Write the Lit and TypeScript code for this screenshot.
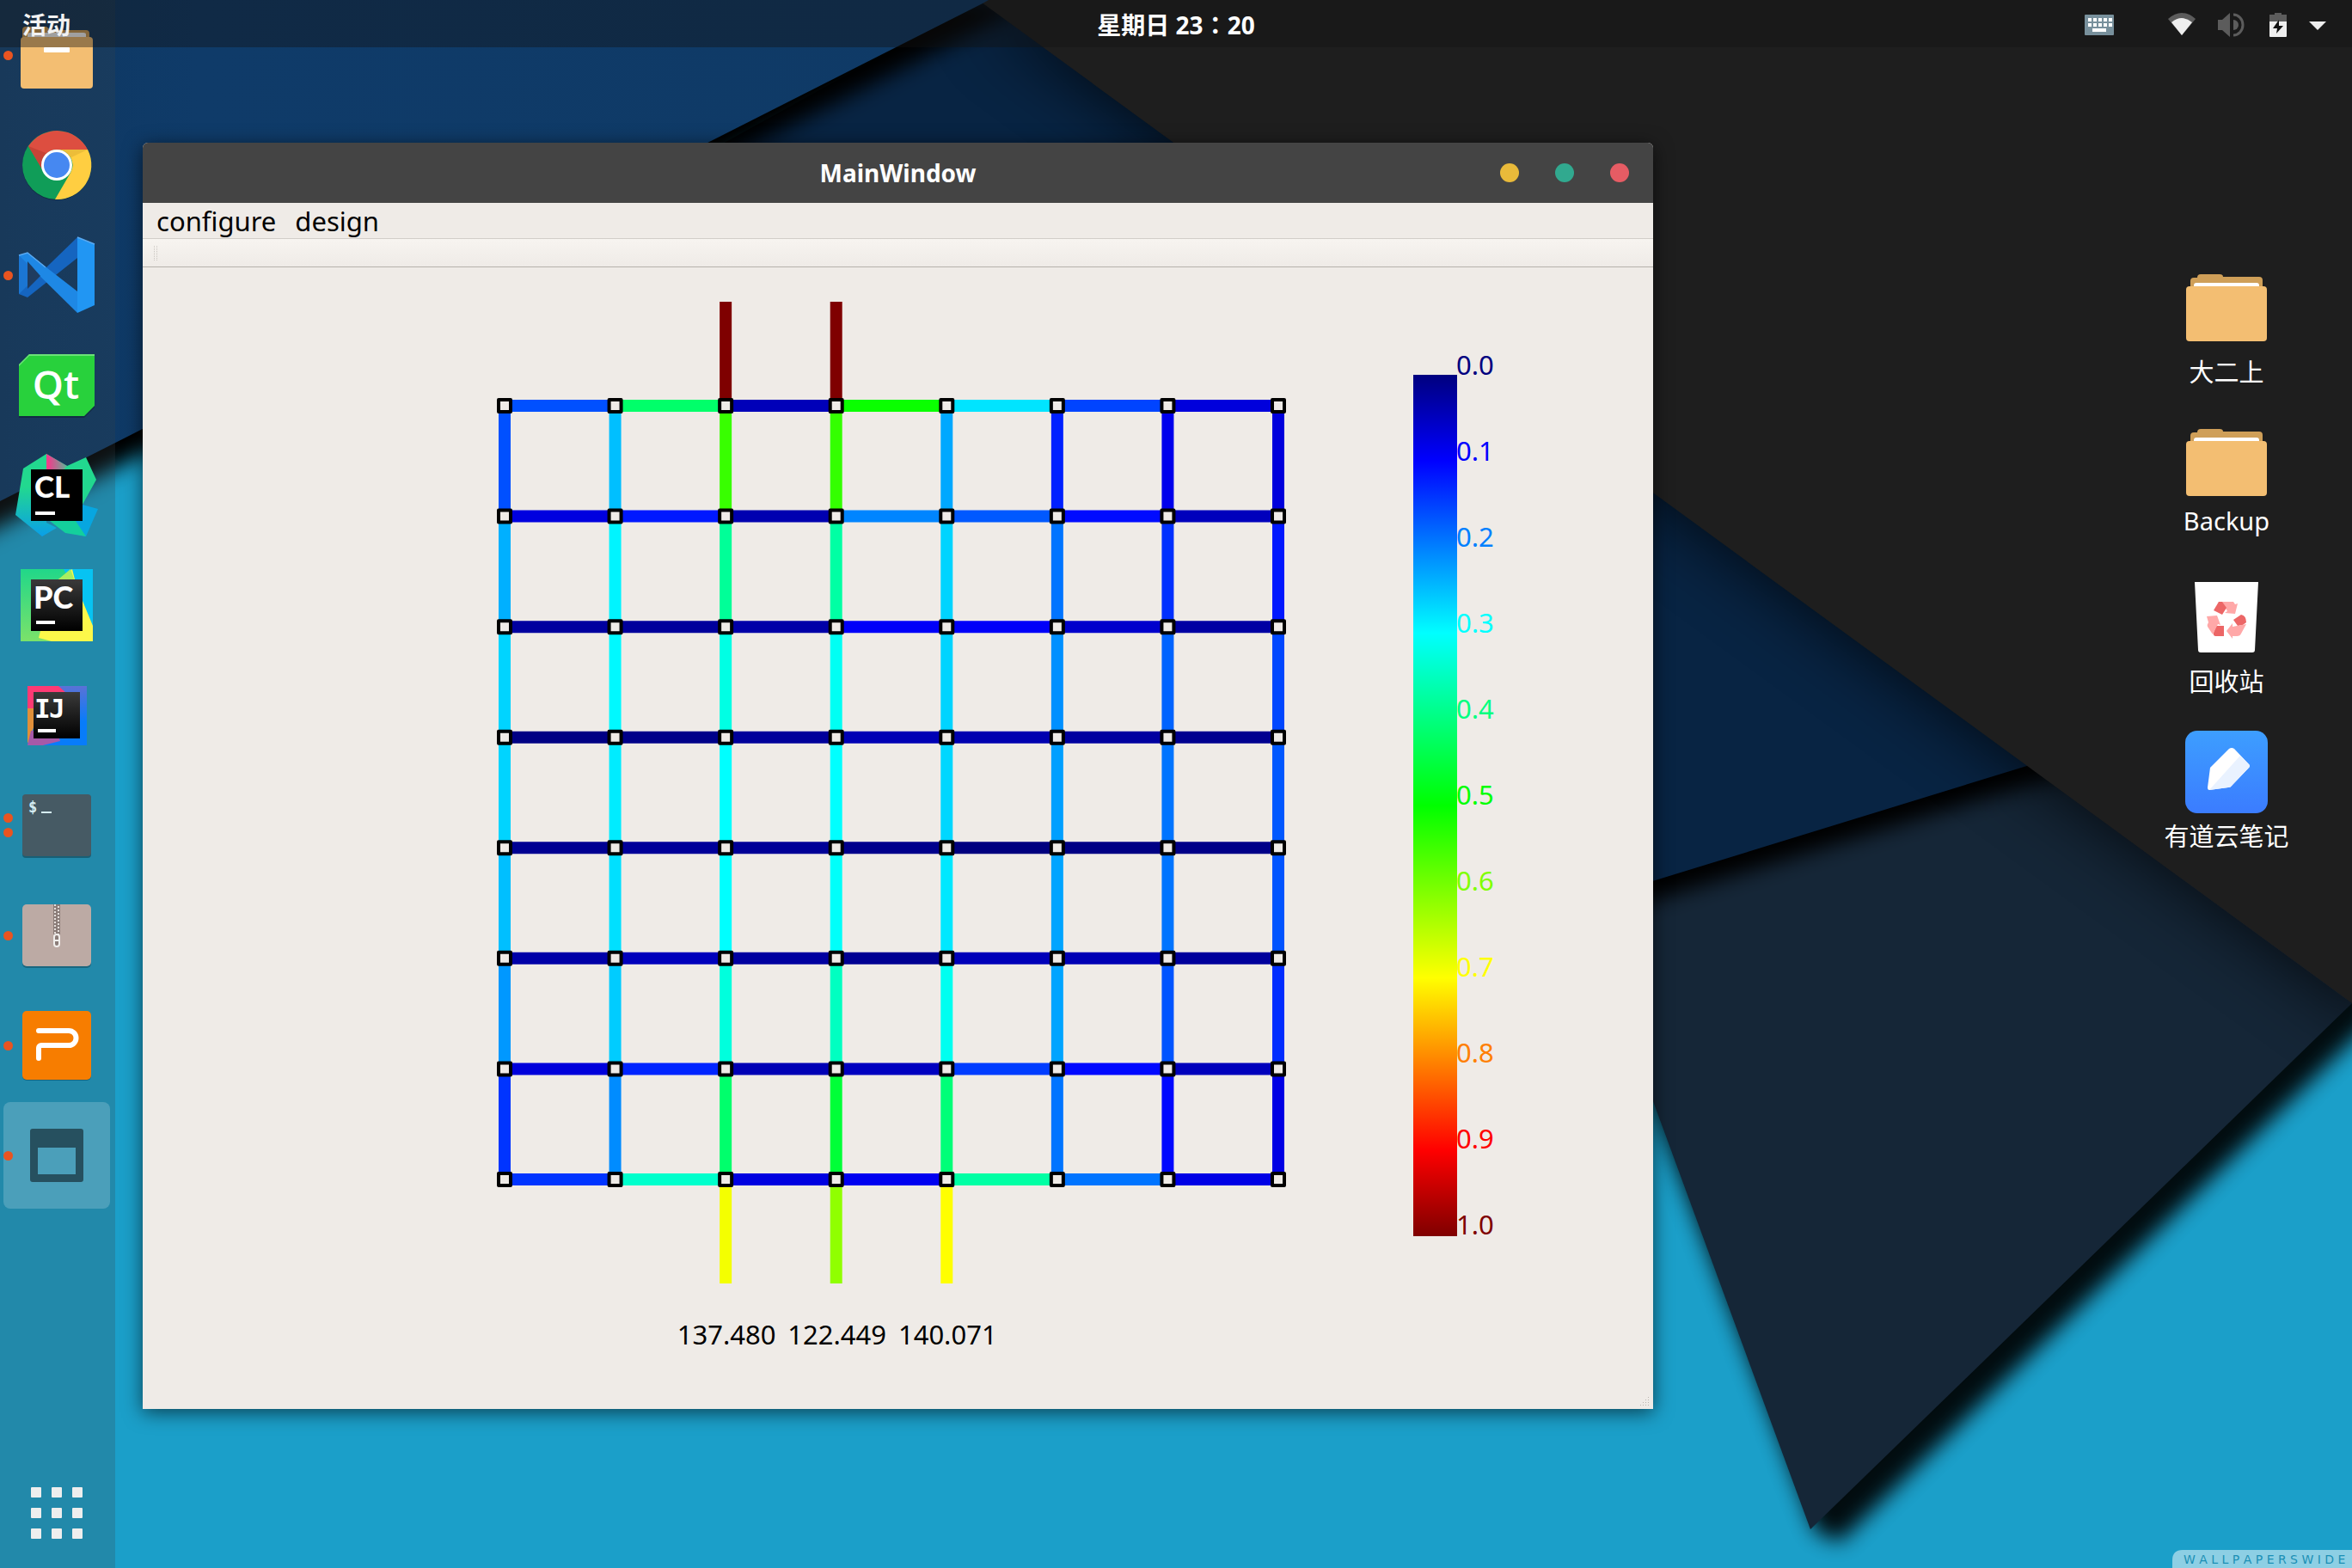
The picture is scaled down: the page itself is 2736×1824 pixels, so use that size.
import { LitElement, html, svg, css } from "lit";
import { customElement, property } from "lit/decorators.js";

const STOPS: [number, number[]][] = [
  [0, [0, 0, 127]],
  [0.1, [0, 0, 255]],
  [0.3, [0, 255, 255]],
  [0.5, [0, 255, 0]],
  [0.7, [255, 255, 0]],
  [0.9, [255, 0, 0]],
  [1, [127, 0, 0]],
];

/** Colour of a flow value between 0 and 1 on the rainbow scale. */
function heat(v: number): string {
  for (let i = 1; i < STOPS.length; i++) {
    const [hi, b] = STOPS[i];
    const [lo, a] = STOPS[i - 1];
    if (v <= hi) {
      const t = (v - lo) / (hi - lo);
      return `rgb(${a.map((c, k) => Math.round(c + (b[k] - c) * t)).join(",")})`;
    }
  }
  return "rgb(127,0,0)";
}

/** Flow through the horizontal channels, one row of the chip per line. */
const ACROSS = [
  [0.163, 0.417, 0.045, 0.508, 0.279, 0.153, 0.073],
  [0.075, 0.119, 0.038, 0.204, 0.17, 0.109, 0.048],
  [0.025, 0.023, 0.032, 0.095, 0.095, 0.06, 0.028],
  [0.004, 0.008, 0.022, 0.042, 0.038, 0.026, 0.013],
  [0.015, 0.02, 0.019, 0.01, 0, 0.004, 0.007],
  [0.032, 0.048, 0.026, 0.016, 0.045, 0.042, 0.023],
  [0.072, 0.128, 0.042, 0.051, 0.147, 0.106, 0.048],
  [0.141, 0.34, 0.076, 0.088, 0.371, 0.191, 0.08],
];

/** Flow through the vertical channels between two rows of nodes. */
const DOWN = [
  [0.163, 0.25, 0.544, 0.541, 0.232, 0.125, 0.085, 0.073],
  [0.238, 0.291, 0.381, 0.371, 0.266, 0.191, 0.138, 0.119],
  [0.266, 0.295, 0.321, 0.309, 0.266, 0.213, 0.178, 0.156],
  [0.266, 0.285, 0.3, 0.3, 0.269, 0.225, 0.191, 0.169],
  [0.25, 0.276, 0.3, 0.304, 0.282, 0.229, 0.191, 0.166],
  [0.219, 0.26, 0.327, 0.349, 0.312, 0.229, 0.166, 0.135],
  [0.141, 0.21, 0.415, 0.456, 0.406, 0.191, 0.106, 0.079],
];

const INLETS = [
  { col: 2, value: 1 },
  { col: 3, value: 1 },
];
const OUTLETS = [
  { col: 2, value: 0.691, label: "137.480" },
  { col: 3, value: 0.613, label: "122.449" },
  { col: 4, value: 0.7, label: "140.071" },
];

@customElement("flow-chart")
class FlowChart extends LitElement {
  static styles = css`
    :host { display: block; }
    .canvas { display: block; width: 100%; height: auto; }
    .label { font: 31px "Noto Sans", "Open Sans", sans-serif; }
    .node { fill: #efebe7; stroke: #000; stroke-width: 4; stroke-linejoin: round; }
    .pipe { stroke-width: 14; }
  `;

  render() {
    const x = (i: number) => 421 + (i * 900) / 7;
    const y = (j: number) => 161 + (j * 900) / 7;
    const pipe = (x1: number, y1: number, x2: number, y2: number, v: number) =>
      svg`<line class="pipe" x1=${x1} y1=${y1} x2=${x2} y2=${y2} stroke=${heat(v)}></line>`;
    const idx = [0, 1, 2, 3, 4, 5, 6, 7];
    return html`<svg class="canvas" viewBox="0 0 1757 1328" role="img" aria-label="Channel flow">
      <defs>
        <linearGradient id="scale" x1="0" y1="0" x2="0" y2="1">
          ${STOPS.map(([o]) => svg`<stop offset=${o} stop-color=${heat(o)}></stop>`)}
        </linearGradient>
      </defs>
      ${INLETS.map((p) => pipe(x(p.col), 40, x(p.col), y(0), p.value))}
      ${OUTLETS.map((p) => pipe(x(p.col), y(7), x(p.col), 1182, p.value))}
      ${DOWN.map((row, j) => row.map((v, i) => pipe(x(i), y(j), x(i), y(j + 1), v)))}
      ${ACROSS.map((row, j) => row.map((v, i) => pipe(x(i), y(j), x(i + 1), y(j), v)))}
      ${idx.map((j) => idx.map((i) => svg`<rect class="node" x=${x(i) - 7} y=${y(j) - 7} width="14" height="14"></rect>`))}
      ${OUTLETS.map((p) => svg`<text class="label" x=${x(p.col) + 1} y="1253" text-anchor="middle">${p.label}</text>`)}
      <rect x="1478" y="125" width="51" height="1002" fill="url(#scale)"></rect>
      ${[...idx, 8, 9, 10].map((k) => svg`<text class="label" x="1528" y=${125 + k * 100} fill=${heat(k / 10)}>${(k / 10).toFixed(1)}</text>`)}
      <g fill="#b9b5b0">
        ${[0, 1, 2, 3].map((r) => [0, 1, 2, 3].filter((c) => c + r > 2).map((c) => svg`<rect x=${1742 + c * 3} y=${1314 + r * 3} width="1" height="1"></rect>`))}
      </g>
    </svg>`;
  }
}

@customElement("main-window")
class MainWindow extends LitElement {
  static styles = css`
    :host {
      display: block;
      border-radius: 6px 6px 0 0;
      background: #efebe7;
      box-shadow: 0 4px 22px rgba(0, 0, 0, 0.6);
      color: #000;
      font: 31px "Noto Sans", "Open Sans", sans-serif;
    }
    .title {
      display: grid;
      grid-template-columns: 1fr auto 1fr;
      align-items: center;
      height: 70px;
      padding: 0 28px;
      border-radius: 6px 6px 0 0;
      background: #444;
      color: #fff;
    }
    .name { grid-column: 2; margin: 0; font-size: 28px; font-weight: 700; line-height: 40px; }
    .buttons { display: flex; justify-content: flex-end; gap: 42px; }
    .dot { width: 22px; height: 22px; padding: 0; border: 0; border-radius: 50%; }
    .min { background: #e9ba3a; }
    .max { background: #31a98f; }
    .close { background: #e65c64; }
    .menu { display: flex; gap: 22px; height: 41px; padding: 0 16px; border-bottom: 1px solid #d2cec9; }
    .item { padding: 0; border: 0; background: none; color: inherit; font: inherit; line-height: 40px; }
    .tools {
      display: flex;
      align-items: center;
      height: 32px;
      padding-left: 13px;
      border-bottom: 1px solid #b6b2ab;
      background: linear-gradient(#f7f4f0, #efebe7);
    }
    .grip { width: 2px; height: 17px; border: dotted #c9c5c0; border-width: 0 1px; }
  `;

  render() {
    return html`
      <header class="title">
        <h1 class="name">MainWindow</h1>
        <div class="buttons">
          <button class="dot min" aria-label="Minimize"></button>
          <button class="dot max" aria-label="Maximize"></button>
          <button class="dot close" aria-label="Close"></button>
        </div>
      </header>
      <nav class="menu">
        <button class="item">configure</button>
        <button class="item">design</button>
      </nav>
      <div class="tools"><span class="grip"></span></div>
      <flow-chart></flow-chart>
    `;
  }
}

const ICONS = {
  files: svg`
    <path d="M8 24v-5a4 4 0 0 1 4-4h24l5 4h41a4 4 0 0 1 4 4v8H8z" fill="#cf9f58"></path>
    <path d="M14 28v-4q0-2 3-2h62q3 0 3 2v4z" fill="#fff"></path>
    <rect x="6" y="27" width="84" height="60" rx="4" fill="#f3be72"></rect>
    <rect x="33" y="39" width="30" height="6" rx="1" fill="#fff"></rect>`,
  chrome: svg`
    <circle cx="48" cy="49" r="40" fill="#000" opacity=".25"></circle>
    <circle cx="48" cy="48" r="40" fill="#109d58"></circle>
    <path d="M15 26A40 40 0 0 1 84 30H48a18 18 0 0 0-17 23z" fill="#dd4e40"></path>
    <path d="M84 30A40 40 0 0 1 46 88L64 57a18 18 0 0 0-16-27z" fill="#ffce41"></path>
    <path d="M15 26l16 27a18 18 0 0 1 7-18z" fill="#b93c31" opacity=".6"></path>
    <path d="M48 30h36l-19 9z" fill="#e0b234" opacity=".6"></path>
    <circle cx="48" cy="48" r="18" fill="#fff"></circle>
    <circle cx="48" cy="48" r="15" fill="#4688f1"></circle>`,
  code: svg`
    <path d="M4 25l10-3v46L4 70z" fill="#1b76d3"></path>
    <path d="M4 70L72 4v24L14 74z" fill="#1565c0"></path>
    <path d="M4 25l10-3L72 67v25z" fill="#1e88e5"></path>
    <path d="M72 4l20 8v71l-20 9z" fill="#2196f3"></path>
    <path d="M4 25l10-3 21 17M72 4l20 8" fill="none" stroke="#5aa9f0" stroke-width="1.500"></path>
    <path d="M14 32v32l15-15z" fill="#1f3c60"></path>`,
  qt: svg`
    <path d="M16 13H92v61L80 86H4V26z" fill="#000" opacity=".25"></path>
    <path d="M16 12H92v60L80 84H4V24z" fill="#28d13c"></path>
    <path d="M16 12H92v2H16L4 26v-2z" fill="#6be277"></path>
    <text x="47" y="64" text-anchor="middle" font-family="Open Sans, sans-serif" font-weight="600" font-size="46" fill="#fff">Qt</text>`,
  clion: svg`
    <defs>
      <linearGradient id="cg" x1="0" y1="0" x2="0" y2="1"><stop offset=".4" stop-color="#22d88f"></stop><stop offset="1" stop-color="#0a9fe8"></stop></linearGradient>
      <linearGradient id="cp" x1="0" y1="0" x2="1" y2="0"><stop offset=".1" stop-color="#ee3e8b"></stop><stop offset="1" stop-color="#5fb397"></stop></linearGradient>
    </defs>
    <path d="M9 17L36 0v80l12 6-17 10L0 71z" fill="url(#cg)"></path>
    <path d="M36 0l24 14 22-10 12 26-20 36H36z" fill="#22d88f"></path>
    <path d="M36 0l24 14-10 12H36z" fill="url(#cp)"></path>
    <path d="M74 58l22 6-14 32-24-5-20-20z" fill="#07a6e0"></path>
    <path d="M40 78h30l12 18-24-4z" fill="#14cf9c"></path>
    <rect x="18" y="18" width="60" height="60" fill="#000"></rect>
    <text x="22" y="51" font-family="Lato, sans-serif" font-weight="900" font-size="35" fill="#fff">CL</text>
    <rect x="23" y="67" width="23" height="4" fill="#fff"></rect>`,
  pycharm: svg`
    <defs>
      <linearGradient id="pb" x1="0" y1="0" x2="0" y2="1"><stop offset="0" stop-color="#3a3a3a"></stop><stop offset="1" stop-color="#000"></stop></linearGradient>
      <linearGradient id="pg" x1="0" y1="0" x2="0" y2="1"><stop offset="0" stop-color="#21d789"></stop><stop offset="1" stop-color="#7be26a"></stop></linearGradient>
    </defs>
    <rect x="6" y="6" width="84" height="84" fill="url(#pg)"></rect>
    <path d="M56 6h34v68z" fill="#07c3f2"></path>
    <path d="M50 18l16-12 5 20 19 46v18H42l-15-4 5-20z" fill="#fcf84a"></path>
    <path d="M50 18l14-12 5 14z" fill="#a9ee60"></path>
    <rect x="18" y="18" width="60" height="60" fill="url(#pb)"></rect>
    <text x="21" y="52" font-family="Lato, sans-serif" font-weight="900" font-size="36" fill="#fff">PC</text>
    <rect x="24" y="66" width="22" height="4" fill="#fff"></rect>`,
  idea: svg`
    <defs>
      <linearGradient id="ib" x1="0" y1="0" x2="0" y2="1"><stop offset="0" stop-color="#3a3a3a"></stop><stop offset="1" stop-color="#000"></stop></linearGradient>
      <linearGradient id="ir" x1="0" y1="0" x2="0" y2="1"><stop offset="0" stop-color="#5a72d6"></stop><stop offset=".6" stop-color="#087cfa"></stop></linearGradient>
    </defs>
    <rect x="14" y="14" width="69" height="69" fill="url(#ir)"></rect>
    <path d="M14 14h36l10 9-20 30-26 2z" fill="#fe3a74"></path>
    <path d="M14 40h14L18 72l-4 9z" fill="#e0903a"></path>
    <path d="M18 66l30 0 4 12-20 5H14z" fill="#a659a8"></path>
    <rect x="21" y="21" width="54" height="54" fill="url(#ib)"></rect>
    <text x="22" y="51" font-family="DejaVu Sans Mono, monospace" font-weight="700" font-size="31" fill="#fff">I</text>
    <text x="39" y="51" font-family="DejaVu Sans Mono, monospace" font-weight="700" font-size="31" fill="#fff">J</text>
    <rect x="26" y="64" width="21" height="4" fill="#fff"></rect>`,
  terminal: svg`
    <rect x="8" y="13" width="80" height="73" rx="4" fill="#000" opacity=".3"></rect>
    <rect x="8" y="12" width="80" height="72" rx="4" fill="#465a64"></rect>
    <text x="15" y="33" font-family="DejaVu Sans Mono, monospace" font-weight="700" font-size="17" fill="#d5ecf2">$</text>
    <rect x="30" y="32" width="12" height="2" fill="#d5ecf2"></rect>`,
  archive: svg`
    <rect x="8" y="14" width="80" height="72" rx="5" fill="#000" opacity=".25"></rect>
    <rect x="8" y="12" width="80" height="72" rx="5" fill="#bcaaa4"></rect>
    <rect x="44" y="12" width="8" height="35" fill="#8b7d79"></rect>
    <path d="M46 12v35M50 14v33" stroke="#e6dfdc" stroke-width="2" stroke-dasharray="2 2"></path>
    <rect x="45" y="47" width="6" height="14" rx="3" fill="#8b7d79" stroke="#f0eeec" stroke-width="2"></rect>
    <path d="M45 54h6" stroke="#f0eeec" stroke-width="2"></path>`,
  wps: svg`
    <rect x="8" y="10" width="80" height="79" rx="5" fill="#000" opacity=".25"></rect>
    <rect x="8" y="8" width="80" height="80" rx="5" fill="#f77d00"></rect>
    <path d="M27 31h35a8 8 0 0 1 0 17H30a3 3 0 0 0-3 3v12" fill="none" stroke="#fff" stroke-width="6" stroke-linecap="round"></path>`,
  window: svg`
    <path d="M20 17h56a3 3 0 0 1 3 3v56a3 3 0 0 1-3 3H20a3 3 0 0 1-3-3V20a3 3 0 0 1 3-3zM26 39v31h44V39z" fill="#26505f" fill-rule="evenodd"></path>`,
  grid: svg`${[18, 42, 66].map((y) => [18, 42, 66].map((x) => svg`<rect x=${x} y=${y} width="12" height="12" rx="1" fill="#eee"></rect>`))}`,
  folder: svg`
    <path d="M6 26v-9q0-4 4-4h4q0-4 4-4h22q4 0 4 3h42q4 0 4 4v10z" fill="#cf9f58"></path>
    <path d="M10 24v-2q0-3 3-3h70q3 0 3 3v2z" fill="#fff"></path>
    <rect x="1" y="23" width="94" height="64" rx="4" fill="#f3be72"></rect>`,
  trash: svg`
    <path d="M11 7H85L81 86q0 3-3 3H18q-3 0-3-3z" fill="#fff"></path>
    <g transform="translate(0 2)">
      <path d="M38 28h18l2 3 3-1-3 12-12-1 3-2-5-9z" fill="#ffa8a8"></path>
      <path d="M33 38l6-10h4l5 7-5 8z" fill="#ec6666"></path>
      <path d="M56 49l9-6q6 1 6 9l-4 3-6 1z" fill="#ec6666"></path>
      <path d="M71 54l-6 11q-1 3-5 3h-5v3l-7-9 7-9v4z" fill="#ffa8a8"></path>
      <path d="M45 56v12H35q-3-1-2-4l3-8z" fill="#ec6666"></path>
      <path d="M25 45l12-1 4 11-3-1-6 12-6-9q-1-2 1-5z" fill="#ffa8a8"></path>
    </g>`,
  note: svg`
    <defs><linearGradient id="ng" x1="0" y1="0" x2="0" y2="1"><stop offset="0" stop-color="#3d9eff"></stop><stop offset="1" stop-color="#3b7cff"></stop></linearGradient></defs>
    <rect width="96" height="96" rx="14" fill="url(#ng)"></rect>
    <path d="M29 43L51 21q3-2 6 0L74 39q2 2 0 4L54 64q-1 2-4 2L28 69q-2 0-2-3z" fill="#fff"></path>
    <path d="M64 29l10 10q2 2 0 4L54 64q-1 2-4 2L28 69z" fill="#e9f2ff"></path>`,
};

type IconName = keyof typeof ICONS;

@customElement("app-icon")
class AppIcon extends LitElement {
  static styles = css`
    :host { display: block; width: 96px; height: 96px; }
    .art { display: block; width: 100%; height: 100%; overflow: visible; }
  `;
  @property() name: IconName = "folder";

  render() {
    return html`<svg class="art" viewBox="0 0 96 96" aria-hidden="true">${ICONS[this.name]}</svg>`;
  }
}

const DOCK: { icon: IconName; label: string; dots: number; active?: boolean }[] = [
  { icon: "files", label: "Files", dots: 1 },
  { icon: "chrome", label: "Chrome", dots: 0 },
  { icon: "code", label: "Code", dots: 1 },
  { icon: "qt", label: "Qt Creator", dots: 0 },
  { icon: "clion", label: "CLion", dots: 0 },
  { icon: "pycharm", label: "PyCharm", dots: 0 },
  { icon: "idea", label: "IntelliJ IDEA", dots: 0 },
  { icon: "terminal", label: "Terminal", dots: 2 },
  { icon: "archive", label: "Archive Manager", dots: 1 },
  { icon: "wps", label: "WPS Presentation", dots: 1 },
  { icon: "window", label: "MainWindow", dots: 1, active: true },
];

const SHORTCUTS: { icon: IconName; label: string; latin?: boolean }[] = [
  { icon: "folder", label: "大二上" },
  { icon: "folder", label: "Backup", latin: true },
  { icon: "trash", label: "回收站" },
  { icon: "note", label: "有道云笔记" },
];

@customElement("app-root")
class AppRoot extends LitElement {
  static styles = css`
    :host {
      display: grid;
      position: relative;
      grid-template-columns: 134px minmax(0, 1fr);
      min-height: 100vh;
      overflow: hidden;
      background: #1b9fc9;
      color: #fff;
      font: 28px "Noto Sans", "Noto Sans CJK SC", sans-serif;
    }
    .wallpaper { position: absolute; inset: 0; width: 100%; height: 100%; }
    .bar {
      position: absolute;
      inset: 0 0 auto 0;
      display: grid;
      grid-template-columns: 1fr auto 1fr;
      align-items: center;
      height: 55px;
      padding: 0 26px;
      background: rgba(18, 18, 18, 0.4);
      font-weight: 700;
    }
    .bar-button { justify-self: start; padding: 0; border: 0; background: none; color: #f2f2f2; font: inherit; line-height: 58px; }
    .clock { font-family: "Noto Sans", "Noto Sans CJK TC", sans-serif; line-height: 56px; }
    .status { display: block; justify-self: end; }
    .dock { position: relative; display: flex; flex-direction: column; background: rgba(58, 66, 70, 0.24); }
    .launcher {
      position: relative;
      display: grid;
      place-items: center;
      width: 124px;
      height: 124px;
      margin: 2px 4px;
      padding: 0;
      border: 0;
      border-radius: 8px;
      background: none;
    }
    .active { background: rgba(255, 255, 255, 0.19); }
    .apps { margin-top: auto; }
    .dots { position: absolute; left: 0; top: 0; bottom: 0; display: flex; flex-direction: column; justify-content: center; gap: 6px; }
    .dot { width: 11px; height: 11px; border-radius: 50%; background: #e95420; }
    .desktop {
      position: relative;
      display: grid;
      grid-template-columns: minmax(0, 1757fr) minmax(0, 521fr) 292px;
      align-items: start;
      padding-left: 32px;
    }
    .main { margin: 166px 0 120px; }
    .shortcuts { grid-column: 3; display: flex; flex-direction: column; margin: 310px 0 0; padding: 0; list-style: none; }
    .shortcut { display: flex; flex-direction: column; align-items: center; height: 180px; color: #fff; font-size: 29px; line-height: 54px; text-decoration: none; }
    .latin { line-height: 40px; }
  `;

  render() {
    return html`
      <svg class="wallpaper" viewBox="0 0 2736 1824" preserveAspectRatio="xMidYMid slice" aria-hidden="true">
        <defs>
          <filter id="tight" x="-20%" y="-20%" width="140%" height="140%"><feGaussianBlur stdDeviation="12"></feGaussianBlur></filter>
          <filter id="wide" x="-20%" y="-20%" width="140%" height="140%"><feGaussianBlur stdDeviation="45"></feGaussianBlur></filter>
          <linearGradient id="sky" x1="0" y1="0" x2="1" y2="0">
            <stop offset="0" stop-color="#0e3761"></stop><stop offset=".2" stop-color="#0f3b69"></stop><stop offset="1" stop-color="#0f3a66"></stop>
          </linearGradient>
          <clipPath id="sheet"><path d="M1143 0L2736 1167 2106 1779 1600 402 900 900 600 300z"></path></clipPath>
        </defs>
        <rect width="2736" height="1824" fill="#1b9fc9"></rect>
        <path d="M1700 700L2400 900 2800 1148 2140 1794 2112 1782z" fill="#000" opacity=".92" filter="url(#tight)"></path>
        <path d="M1500 130L2736 1167 2106 1779z" fill="#152637"></path>
        <g clip-path="url(#sheet)">
          <path d="M1143 0L2420 894 1500 1178z" fill="#000" filter="url(#tight)"></path>
          <path d="M1143 0L2361 890 1500 1155 600 900 600 270z" fill="#082443"></path>
          <path d="M1143 0L2790 1200 2790 0z" fill="#000" opacity=".85" filter="url(#wide)"></path>
        </g>
        <path d="M-60 0H1190L1180 14 -60 643z" fill="#000" filter="url(#tight)"></path>
        <path d="M1138 0H2736V1167z" fill="#1e1e1e"></path>
        <path d="M0 0H1150L1143 4 0 583z" fill="url(#sky)"></path>
        <path d="M2527 1824v-9q0-12 12-12H2736v21z" fill="#fff" opacity=".5"></path>
        <text x="2540" y="1819" font-family="DejaVu Sans, sans-serif" font-size="14" fill="#1b8fb5">W A L L P A P E R S W I D E</text>
      </svg>

      <nav class="dock">
        ${DOCK.map(
          (d) => html`<button class="launcher ${d.active ? "active" : ""}" aria-label=${d.label}>
            <span class="dots">${Array.from({ length: d.dots }, () => html`<span class="dot"></span>`)}</span>
            <app-icon name=${d.icon}></app-icon>
          </button>`
        )}
        <button class="launcher apps" aria-label="Show Applications"><app-icon name="grid"></app-icon></button>
      </nav>

      <main class="desktop">
        <main-window class="main"></main-window>
        <ul class="shortcuts">
          ${SHORTCUTS.map(
            (s) => html`<li><a class="shortcut ${s.latin ? "latin" : ""}" href="#"><app-icon name=${s.icon}></app-icon>${s.label}</a></li>`
          )}
        </ul>
      </main>

      <header class="bar">
        <button class="bar-button">活动</button>
        <time class="clock">星期日 23：20</time>
        <svg class="status" width="285" height="55" viewBox="2425 0 285 55" role="img" aria-label="System status">
          <rect x="2425" y="15" width="34" height="24" rx="1" fill="#78909c"></rect>
          <g fill="#fff">
            ${[0, 1, 2, 3, 4].map((i) => svg`<rect x=${2429 + i * 6} y="19" width="4" height="4"></rect><rect x=${2429 + i * 6} y="25" width="4" height="4"></rect>`)}
            <rect x="2434" y="31" width="16" height="4"></rect>
          </g>
          <path d="M2538 39L2522 20Q2538 6 2554 20z" fill="#5c5c5c"></path>
          <path d="M2538 39L2526 24Q2538 14 2550 24z" fill="#eee"></path>
          <path d="M2580 21h5l9-8v28l-9-8h-5z" fill="#5c5c5c"></path>
          <path d="M2598 21a6 6 0 0 1 0 12z" fill="#5c5c5c"></path>
          <path d="M2598 15a11 12 0 0 1 0 24" fill="none" stroke="#5c5c5c" stroke-width="3"></path>
          <path d="M2640 23v-8h6v-2h8v2h6v8z" fill="#5c5c5c"></path>
          <path d="M2640 23h20v17q0 1-1 1h-18q-1 0-1-1z" fill="#eee"></path>
          <path d="M2651 21l-7 10h5l-1 6 8-9h-5z" fill="#111"></path>
          <path d="M2686 23h20l-10 10z" fill="#eee"></path>
        </svg>
      </header>
    `;
  }
}
